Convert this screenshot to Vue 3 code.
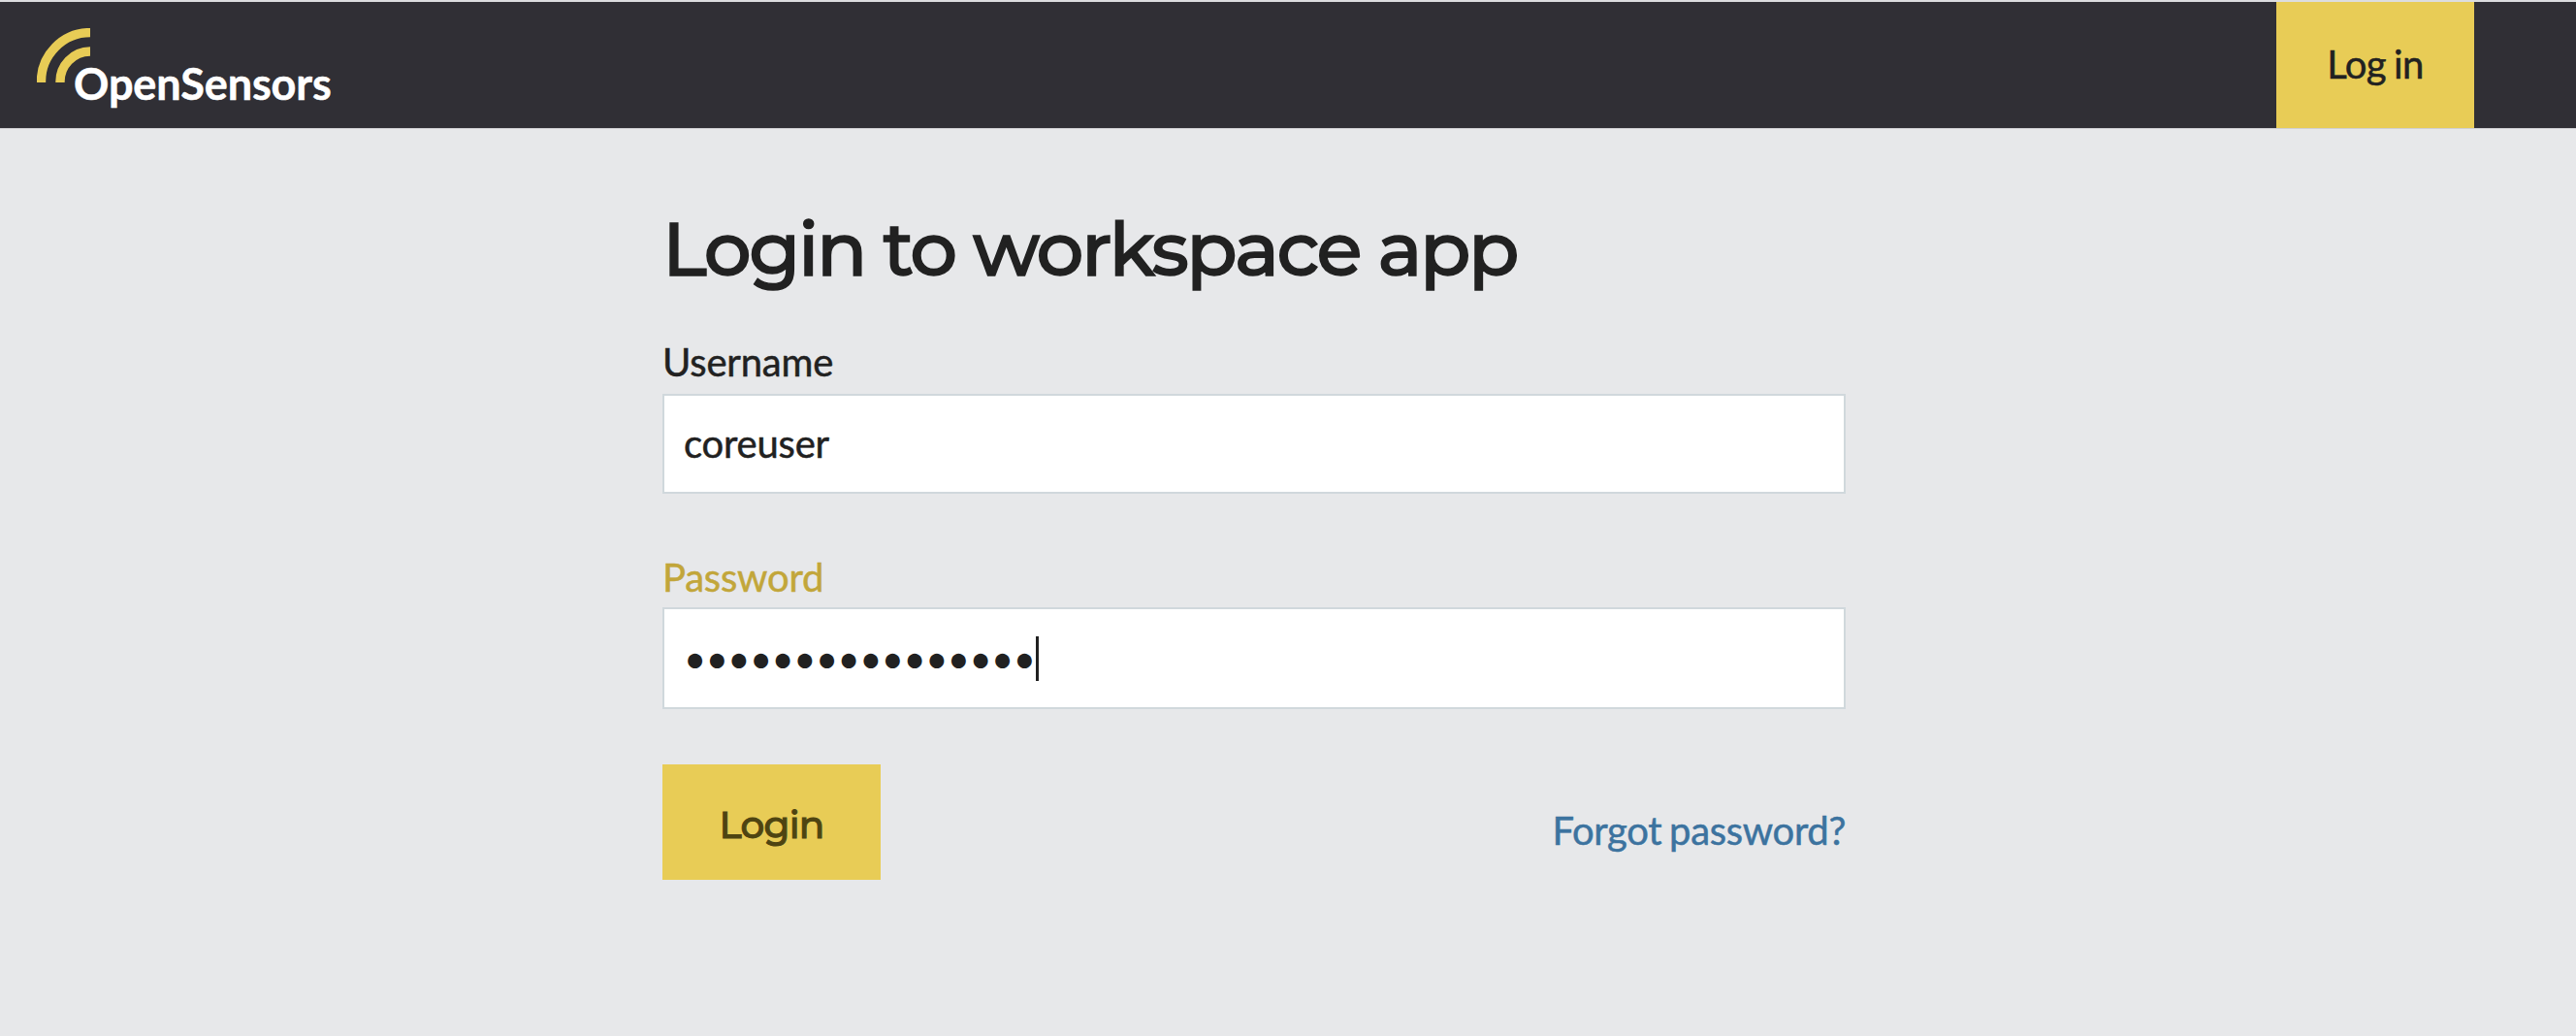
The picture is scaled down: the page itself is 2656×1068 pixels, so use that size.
<script setup>
import { ref } from 'vue'

const username = ref('coreuser')
const passwordLength = ref(16)
</script>

<template>
  <div class="page">
    <header class="navbar">
      <a class="brand" href="#">
        <svg class="brand__waves" width="55" height="56" viewBox="0 0 55 56">
          <path d="M4.5 56A50.5 50.5 0 0 1 55 4.6" />
          <path d="M24 56A31.2 31.2 0 0 1 55 24" />
        </svg>
        <span class="brand__name">OpenSensors</span>
      </a>
      <a class="navbar__login" href="#">Log in</a>
    </header>

    <main class="login">
      <h1>Login to workspace app</h1>

      <form @submit.prevent>
        <div class="field">
          <label for="username">Username</label>
          <input id="username" v-model="username" class="field__box" type="text" />
        </div>

        <div class="field field--active">
          <label>Password</label>
          <div class="field__box field__box--password">
            <span class="bullets">{{ '•'.repeat(passwordLength) }}</span>
            <span class="caret"></span>
          </div>
        </div>

        <div class="actions">
          <button type="submit">Login</button>
          <a href="#">Forgot password?</a>
        </div>
      </form>
    </main>
  </div>
</template>

<style>
body {
  background: #e7e8ea;
}
</style>

<style scoped>
.page {
  box-sizing: border-box;
  min-height: 1068px;
  border-top: 2px solid #dcdddf;
  background: #e7e8ea;
  color: #212121;
  font-family: Lato, sans-serif;
  font-size: 40px;
  line-height: 48px;
  letter-spacing: -0.2px;
  word-spacing: -2px;
  -webkit-text-stroke-width: 0.5px;
}

a {
  text-decoration: none;
}

/* Navbar */
.navbar {
  display: flex;
  justify-content: space-between;
  height: 130px;
  padding: 0 105px 0 38px;
  border-bottom: 1px solid #d0d0d3;
  background: #302f35;
  background-clip: padding-box;
}

.brand {
  display: flex;
  align-items: flex-start;
}

.brand__waves {
  margin-top: 27px;
  fill: none;
  stroke: #e8cc56;
  stroke-width: 9.4;
}

.brand__name {
  margin: 57px 0 0 -17px;
  color: #fff;
  font-size: 45px;
  font-weight: 700;
  line-height: 54px;
  letter-spacing: -0.1px;
}

.navbar__login {
  box-sizing: border-box;
  width: 204px;
  padding-top: 40px;
  background: #e8cc56;
  color: #212121;
  letter-spacing: -0.5px;
  text-align: center;
}

/* Form */
.login {
  width: 1220px;
  margin-left: 683px;
}

h1 {
  margin: 74px 0 0;
  font-family: Montserrat, Inter, sans-serif;
  font-size: 77px;
  font-weight: 500;
  line-height: 99px;
  letter-spacing: -2.45px;
  word-spacing: 0;
  white-space: nowrap;
  -webkit-text-stroke-width: 1.5px;
}

.field {
  display: flex;
  flex-direction: column;
}

.field label {
  margin: 43px 0 9px;
}

.field--active label {
  margin: 62px 0 7px;
  color: #c2a63a;
}

.field__box {
  box-sizing: border-box;
  width: 1220px;
  height: 103px;
  padding: 0 20px 2px;
  border: 2px solid #d0d8dc;
  border-radius: 0;
  outline: none;
  background: #fff;
  color: #212121;
  font: inherit;
  letter-spacing: inherit;
}

.field__box--password {
  display: flex;
  align-items: center;
  height: 105px;
  padding-bottom: 0;
}

.bullets {
  letter-spacing: -0.55px;
  -webkit-text-stroke-width: 0;
}

.caret {
  width: 3px;
  height: 46px;
  margin-left: 1px;
  background: #212121;
}

.actions {
  display: flex;
  justify-content: space-between;
  align-items: flex-start;
  margin-top: 57px;
}

.actions button {
  width: 225px;
  height: 119px;
  padding: 5px 0 0;
  border: 0;
  background: #e8cc56;
  color: #4e4411;
  font-family: Montserrat, Inter, sans-serif;
  font-size: 39px;
  font-weight: 500;
  letter-spacing: -0.8px;
  -webkit-text-stroke-width: 1px;
}

.actions a {
  margin-top: 44px;
  color: #3c739f;
  letter-spacing: -0.33px;
}
</style>
